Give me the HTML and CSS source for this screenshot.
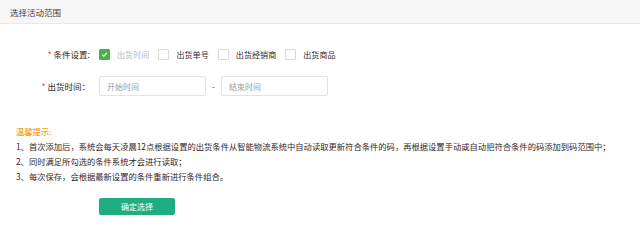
FILE: index.html
```html
<!DOCTYPE html>
<html lang="zh">
<head>
<meta charset="utf-8">
<link rel="stylesheet" href="styles.css">
</head>
<body>
<div class="panel">
  <div class="panel-head">选择活动范围</div>
  <div class="form">
    <div class="row row-check">
      <div class="label"><span class="req">*</span> 条件设置:</div>
      <div class="controls">
        <label class="check checked"><span class="box"><svg viewBox="0 0 11 11" width="11" height="11"><path d="M2.6 5.6 L4.7 7.6 L8.4 3.6" fill="none" stroke="#fff" stroke-width="1.3"/></svg></span><span class="ctext muted">出货时间</span></label>
        <label class="check"><span class="box"></span><span class="ctext">出货单号</span></label>
        <label class="check"><span class="box"></span><span class="ctext">出货经销商</span></label>
        <label class="check"><span class="box"></span><span class="ctext">出货商品</span></label>
      </div>
    </div>
    <div class="row row-date">
      <div class="label"><span class="req">*</span> 出货时间：</div>
      <div class="controls">
        <div class="input">开始时间</div>
        <span class="dash">-</span>
        <div class="input">结束时间</div>
      </div>
    </div>
  </div>
  <div class="tips">
    <div class="tips-title">温馨提示:</div>
    <div class="tip">1、首次添加后，系统会每天凌晨12点根据设置的出货条件从智能物流系统中自动读取更新符合条件的码，再根据设置手动或自动把符合条件的码添加到码范围中；</div>
    <div class="tip">2、同时满足所勾选的条件系统才会进行读取；</div>
    <div class="tip">3、每次保存，会根据最新设置的条件重新进行条件组合。</div>
  </div>
  <div class="actions">
    <button class="btn">确定选择</button>
  </div>
</div>
</body>
</html>
```
FILE: styles.css
```css
* { box-sizing: border-box; }
html, body {
  margin: 0;
  padding: 0;
  background: #fff;
}
body {
  font-family: "Noto Sans CJK SC", "Liberation Sans", sans-serif;
  color: #33282a;
  font-size: 8px;
  width: 640px;
  height: 232px;
  overflow: hidden;
}
.panel-head {
  height: 24px;
  background: #f6f6f6;
  border-bottom: 1px solid #e9e9e9;
  padding-left: 10px;
  display: flex;
  align-items: center;
  font-size: 8.5px;
  color: #4a3c3c;
}
.form {
  padding-top: 23px;
}
.row {
  display: flex;
  align-items: center;
}
.row-check { height: 14px; }
.row-date { height: 20px; margin-top: 15px; }
.label {
  width: 90px;
  text-align: right;
  font-size: 8.5px;
  color: #33282a;
  flex: none;
}
.req { color: #e8413b; }
.controls {
  display: flex;
  align-items: center;
  margin-left: 9px;
}
.check {
  display: flex;
  align-items: center;
  margin-right: 9px;
}
.box {
  width: 11px;
  height: 11px;
  border: 1px solid #d9d9d9;
  border-radius: 1px;
  background: #fff;
  display: flex;
  align-items: center;
  justify-content: center;
}
.check.checked .box {
  background: #4cb050;
  border-color: #4cb050;
}
.box svg { display: block; }
.ctext {
  margin-left: 7px;
  font-size: 8.1px;
  color: #33282a;
}
.ctext.muted { color: #b8b8b8; }
.input {
  width: 107px;
  height: 20px;
  border: 1px solid #e3e3e3;
  border-radius: 2px;
  padding-left: 7px;
  display: flex;
  align-items: center;
  color: #9a9a9a;
  font-size: 8px;
}
.dash {
  width: 15px;
  text-align: center;
  color: #33282a;
}
.tips {
  margin-top: 28px;
  padding-left: 16px;
  font-size: 8.3px;
  line-height: 15px;
}
.tips-title {
  color: #f5a11c;
  font-weight: 500;
}
.tip { color: #33282a; }
.actions {
  margin-top: 14px;
  padding-left: 99px;
}
.btn {
  width: 76px;
  height: 17px;
  border: none;
  border-radius: 2px;
  background: #1fae81;
  color: #fff;
  font-family: inherit;
  font-size: 8px;
  padding: 0;
}
```
